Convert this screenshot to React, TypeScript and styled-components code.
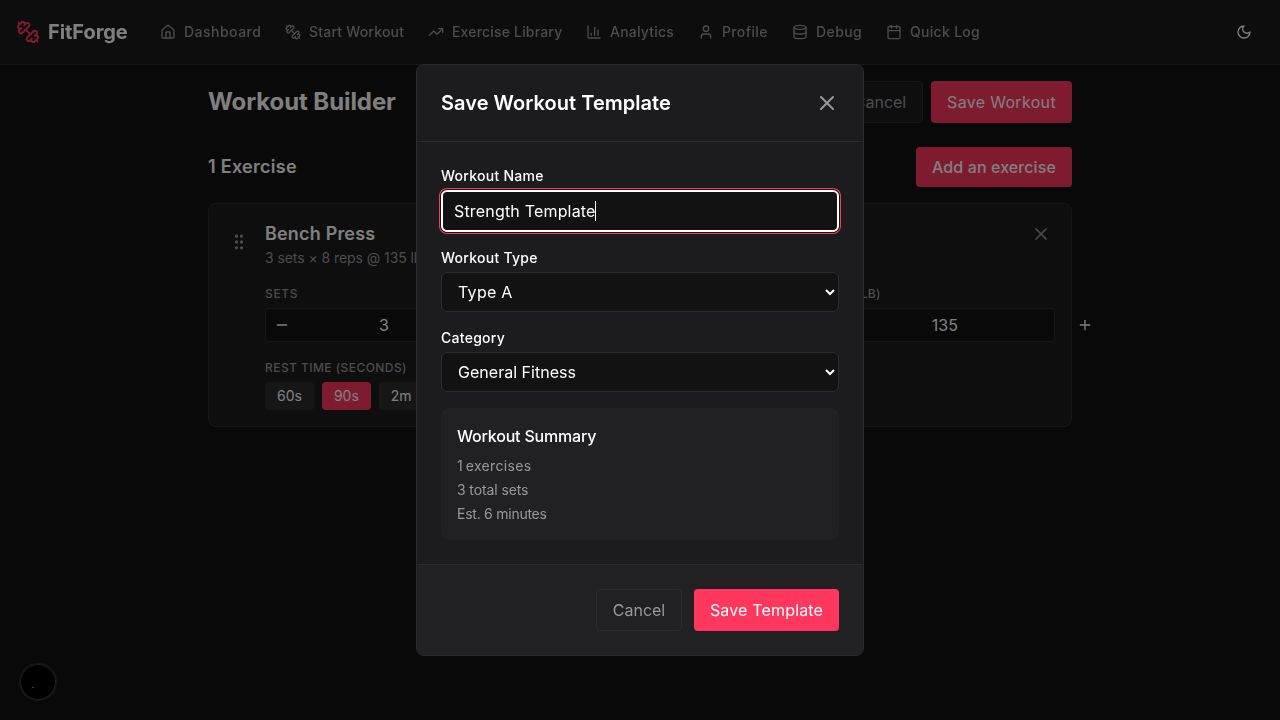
import React from "react";
import styled, { createGlobalStyle } from "styled-components";
import {
  Calendar,
  ChartColumn,
  Database,
  GripVertical,
  House,
  Minus,
  Plus,
  TrendingUp,
  User,
  X,
} from "lucide-react";

const GlobalStyle = createGlobalStyle`
  *, *::before, *::after { box-sizing: border-box; }
  html, body { margin: 0; height: 100%; overflow: hidden; }
  body {
    background: #121212;
    color: #ffffff;
    font-family: Inter, "Liberation Sans", sans-serif;
    font-size: 16px;
    line-height: 24px;
  }
  button, input, select { font: inherit; color: inherit; }
  h1, h2, h3, h4, p { margin: 0; }
  svg { display: block; flex-shrink: 0; }
`;

const Header = styled.header`
  display: flex;
  align-items: center;
  height: 65px;
  padding: 0 16px;
  border-bottom: 1px solid #2c2c2e;
  background: #1a1a1a;
  will-change: transform;
`;

const Brand = styled.div`
  display: flex;
  align-items: center;
  gap: 8px;
  width: 112px;
  margin-right: 32px;
  font-size: 20px;
  font-weight: 700;
  line-height: 28px;
  letter-spacing: -0.06px;
  svg { color: #ff375f; }
`;

const Nav = styled.nav`
  display: flex;
  flex: 1;
  gap: 24px;
`;

const NavItem = styled.a`
  display: flex;
  align-items: center;
  gap: 8px;
  color: #98989d;
  font-size: 14px;
  font-weight: 500;
  line-height: 20px;
`;

const NavLabel = styled.span<{ $width: number; $track: number }>`
  width: ${(p) => p.$width}px;
  letter-spacing: ${(p) => p.$track}px;
  white-space: nowrap;
`;

const ThemeToggle = styled.button`
  display: grid;
  place-items: center;
  width: 40px;
  height: 40px;
  padding: 0;
  border: 0;
  background: none;
`;

const Main = styled.main`
  width: 896px;
  margin: 0 auto;
  padding: 16px;
`;

const SplitRow = styled.div<{ $bottom: number }>`
  display: flex;
  align-items: center;
  justify-content: space-between;
  margin-bottom: ${(p) => p.$bottom}px;
`;

const PageTitle = styled.h1`
  font-size: 24px;
  font-weight: 700;
  line-height: 32px;
  letter-spacing: -0.09px;
`;

const SectionTitle = styled.h2`
  font-size: 18px;
  font-weight: 600;
  line-height: 28px;
  letter-spacing: 0.28px;
`;

const ButtonGroup = styled.div<{ $gap: number }>`
  display: flex;
  gap: ${(p) => p.$gap}px;
`;

const Button = styled.button<{
  $variant?: "primary" | "outline";
  $fill?: string;
  $weight?: number;
  $height?: number;
  $width: number;
  $track?: number;
}>`
  width: ${(p) => p.$width}px;
  height: ${(p) => p.$height ?? 42}px;
  padding: 0;
  border-radius: 4px;
  border: ${(p) => (p.$variant === "outline" ? "1px solid #2c2c2e" : "0")};
  background: ${(p) => p.$fill ?? (p.$variant === "outline" ? "transparent" : "#ff375f")};
  color: ${(p) => (p.$variant === "outline" ? "#98989d" : "#ffffff")};
  font-weight: ${(p) => p.$weight ?? 400};
  letter-spacing: ${(p) => p.$track ?? 0}px;
  white-space: nowrap;
`;

const ExerciseCard = styled.section`
  display: flex;
  gap: 12px;
  height: 224px;
  padding: 16px;
  border: 1px solid #2c2c2e;
  border-radius: 8px;
  background: #1c1c1e;
`;

const DragHandle = styled.div`
  padding: 12px 0 0 4px;
  width: 28px;
  color: #98989d;
`;

const ExerciseBody = styled.div`
  flex: 1;
  min-width: 0;
`;

const ExerciseHead = styled.div`
  display: flex;
  align-items: flex-start;
  justify-content: space-between;
  margin-bottom: 18px;
`;

const ExerciseName = styled.h3`
  font-size: 18px;
  font-weight: 600;
  line-height: 28px;
  letter-spacing: 0.18px;
`;

const ExerciseMeta = styled.p`
  color: #98989d;
  font-size: 14px;
  line-height: 20px;
  letter-spacing: -0.07px;
`;

const IconButton = styled.button<{ $pad: number }>`
  padding: ${(p) => p.$pad}px;
  border: 0;
  background: none;
  color: #98989d;
`;

const FieldGrid = styled.div`
  display: grid;
  grid-template-columns: repeat(3, minmax(0, 1fr));
  gap: 16px;
  margin-bottom: 18px;
`;

const SmallLabel = styled.div<{ $track: number }>`
  margin-bottom: 6px;
  color: #98989d;
  font-size: 12px;
  font-weight: 500;
  line-height: 16px;
  letter-spacing: ${(p) => p.$track}px;
  text-transform: uppercase;
`;

const Stepper = styled.div`
  display: flex;
  align-items: center;
  height: 34px;
  border: 1px solid #2c2c2e;
  border-radius: 4px;
  background: #121212;
`;

const StepButton = styled.button`
  display: grid;
  place-items: center;
  flex: 0 0 32px;
  height: 32px;
  padding: 0;
  border: 0;
  background: none;
`;

const StepValue = styled.div<{ $width?: number }>`
  flex: ${(p) => (p.$width ? `0 0 ${p.$width}px` : "1")};
  padding-right: 15px;
  text-align: center;
`;

const ChipRow = styled.div`
  display: flex;
  gap: 8px;
`;

const Chip = styled.button<{ $active?: boolean }>`
  height: 28px;
  padding: 0 12px;
  border: 0;
  border-radius: 4px;
  background: ${(p) => (p.$active ? "#ff375f" : "#2c2c2e")};
  font-size: 14px;
  line-height: 20px;
`;

const Overlay = styled.div`
  position: fixed;
  inset: 0;
  display: flex;
  align-items: center;
  justify-content: center;
  background: rgba(0, 0, 0, 0.5);
`;

const Dialog = styled.div`
  width: 448px;
  height: 592px;
  border: 1px solid #2c2c2e;
  border-radius: 8px;
  background: #1c1c1e;
  overflow: hidden;
`;

const DialogHead = styled.div`
  display: flex;
  align-items: center;
  justify-content: space-between;
  height: 77px;
  padding: 0 24px;
  border-bottom: 1px solid #2c2c2e;
`;

const DialogTitle = styled.h2`
  font-size: 20px;
  font-weight: 600;
  line-height: 28px;
  letter-spacing: 0.04px;
`;

const DialogBody = styled.div`
  padding: 24px;
`;

const Field = styled.div`
  margin-bottom: 16px;
`;

const FieldLabel = styled.label`
  display: block;
  margin-bottom: 4px;
  font-size: 14px;
  font-weight: 500;
  line-height: 20px;
  letter-spacing: 0.27px;
`;

const NameInput = styled.div`
  display: flex;
  align-items: center;
  height: 42px;
  padding: 0 11px;
  border: 2px solid #ffffff;
  border-radius: 6px;
  background: #121212;
  box-shadow: 0 0 0 1px #121212, 0 0 0 2px #ff375f;
  letter-spacing: 0.18px;
`;

const Caret = styled.span`
  width: 1px;
  height: 20px;
  margin-left: -1px;
  background: #ffffff;
`;

const Select = styled.select<{ $track: number }>`
  display: block;
  width: 100%;
  height: 40px;
  padding: 0 0 0 12px;
  border: 1px solid #2c2c2e;
  border-radius: 6px;
  background: #121212;
  outline: none;
  letter-spacing: ${(p) => p.$track}px;
`;

const Summary = styled.div`
  height: 132px;
  padding: 16px;
  border-radius: 8px;
  background: #212123;
`;

const SummaryTitle = styled.h4`
  margin-bottom: 8px;
  font-size: 16px;
  font-weight: 500;
  line-height: 24px;
  letter-spacing: -0.19px;
`;

const SummaryLine = styled.p<{ $track: number; $wordGap?: number }>`
  margin-bottom: 4px;
  color: #98989d;
  font-size: 14px;
  line-height: 20px;
  letter-spacing: ${(p) => p.$track}px;
  word-spacing: ${(p) => p.$wordGap ?? 0}px;
`;

const DialogFoot = styled.div`
  display: flex;
  justify-content: flex-end;
  gap: 12px;
  height: 92px;
  padding: 24px;
  border-top: 1px solid #2c2c2e;
  background: #212123;
`;

const DevBadge = styled.div`
  position: fixed;
  left: 20px;
  bottom: 20px;
  width: 36px;
  height: 36px;
  border-radius: 50%;
  background: #000000;
  box-shadow: inset 0 0 0 1px #3c3c3c, 0 0 0 1px #2e2e2e;
`;

const DevBadgeMark = styled.span`
  position: absolute;
  left: 12px;
  top: 23px;
  width: 2px;
  height: 1px;
  background: #777777;
`;

function DumbbellIcon({ size }: { size: number }) {
  return (
    <svg
      width={size}
      height={size}
      viewBox="0 0 24 24"
      fill="none"
      stroke="currentColor"
      strokeWidth="2"
      strokeLinecap="round"
      strokeLinejoin="round"
    >
      <path d="M14.4 14.4 9.6 9.6" />
      <path d="M18.657 21.485a2 2 0 1 1-2.829-2.828l-1.767 1.768a2 2 0 1 1-2.829-2.829l6.364-6.364a2 2 0 1 1 2.829 2.829l-1.768 1.767a2 2 0 1 1 2.828 2.829z" />
      <path d="m21.5 21.5-1.4-1.4" />
      <path d="M3.9 3.9 2.5 2.5" />
      <path d="M6.404 12.768a2 2 0 1 1-2.829-2.829l1.768-1.767a2 2 0 1 1-2.828-2.829l2.828-2.828a2 2 0 1 1 2.829 2.828l1.767-1.768a2 2 0 1 1 2.829 2.829z" />
    </svg>
  );
}

function MoonIcon() {
  return (
    <svg
      width="16"
      height="16"
      viewBox="0 0 24 24"
      fill="none"
      stroke="currentColor"
      strokeWidth="2"
      strokeLinecap="round"
      strokeLinejoin="round"
    >
      <path d="M12 3a6 6 0 0 0 9 9 9 9 0 1 1-9-9Z" />
    </svg>
  );
}

const navItems = [
  { label: "Dashboard", icon: <House size={16} />, width: 77, track: 0.48 },
  { label: "Start Workout", icon: <DumbbellIcon size={16} />, width: 95, track: 0.2 },
  { label: "Exercise Library", icon: <TrendingUp size={16} />, width: 110, track: 0.18 },
  { label: "Analytics", icon: <ChartColumn size={16} />, width: 64, track: 0.22 },
  { label: "Profile", icon: <User size={16} />, width: 46, track: 0.36 },
  { label: "Debug", icon: <Database size={16} />, width: 46, track: 0.4 },
  { label: "Quick Log", icon: <Calendar size={16} />, width: 70, track: 0.3 },
];

const steppers = [
  { label: "Sets", value: "3", track: 0.65 },
  { label: "Reps", value: "8", track: 0.6 },
  { label: "Weight (lb)", value: "135", width: 234, track: 0.3 },
];

const restTimes = ["60s", "90s", "2m", "3m"];

export default function App() {
  return (
    <>
      <GlobalStyle />
      <Header>
        <Brand>
          <DumbbellIcon size={24} />
          FitForge
        </Brand>
        <Nav>
          {navItems.map((item) => (
            <NavItem key={item.label}>
              {item.icon}
              <NavLabel $width={item.width} $track={item.track}>
                {item.label}
              </NavLabel>
            </NavItem>
          ))}
        </Nav>
        <ThemeToggle aria-label="Toggle theme">
          <MoonIcon />
        </ThemeToggle>
      </Header>

      <Main>
        <SplitRow $bottom={24}>
          <PageTitle>Workout Builder</PageTitle>
          <ButtonGroup $gap={8}>
            <Button $variant="outline" $fill="#1c1c1e" $width={86}>
              Cancel
            </Button>
            <Button $width={141} $track={0.32}>
              Save Workout
            </Button>
          </ButtonGroup>
        </SplitRow>
        <SplitRow $bottom={16}>
          <SectionTitle>1 Exercise</SectionTitle>
          <Button $weight={500} $height={40} $width={156} $track={0.1}>
            Add an exercise
          </Button>
        </SplitRow>

        <ExerciseCard>
          <DragHandle>
            <GripVertical size={20} />
          </DragHandle>
          <ExerciseBody>
            <ExerciseHead>
              <div>
                <ExerciseName>Bench Press</ExerciseName>
                <ExerciseMeta>3 sets × 8 reps @ 135 lb</ExerciseMeta>
              </div>
              <IconButton $pad={4} aria-label="Remove exercise">
                <X size={20} />
              </IconButton>
            </ExerciseHead>
            <FieldGrid>
              {steppers.map((s) => (
                <div key={s.label}>
                  <SmallLabel $track={s.track}>{s.label}</SmallLabel>
                  <Stepper>
                    <StepButton aria-label="Decrease">
                      <Minus size={16} />
                    </StepButton>
                    <StepValue $width={s.width}>{s.value}</StepValue>
                    <StepButton aria-label="Increase">
                      <Plus size={16} />
                    </StepButton>
                  </Stepper>
                </div>
              ))}
            </FieldGrid>
            <SmallLabel $track={0.44}>Rest Time (seconds)</SmallLabel>
            <ChipRow>
              {restTimes.map((t) => (
                <Chip key={t} $active={t === "90s"}>
                  {t}
                </Chip>
              ))}
            </ChipRow>
          </ExerciseBody>
        </ExerciseCard>
      </Main>

      <DevBadge>
        <DevBadgeMark />
      </DevBadge>

      <Overlay>
        <Dialog role="dialog">
          <DialogHead>
            <DialogTitle>Save Workout Template</DialogTitle>
            <IconButton $pad={0} aria-label="Close">
              <X size={24} />
            </IconButton>
          </DialogHead>
          <DialogBody>
            <Field>
              <FieldLabel>Workout Name</FieldLabel>
              <NameInput>
                Strength Template
                <Caret />
              </NameInput>
            </Field>
            <Field>
              <FieldLabel>Workout Type</FieldLabel>
              <Select defaultValue="Type A" $track={0.28}>
                <option>Type A</option>
                <option>Type B</option>
              </Select>
            </Field>
            <Field>
              <FieldLabel>Category</FieldLabel>
              <Select defaultValue="General Fitness" $track={0.02}>
                <option>General Fitness</option>
              </Select>
            </Field>
            <Summary>
              <SummaryTitle>Workout Summary</SummaryTitle>
              <SummaryLine $track={0.35} $wordGap={-1.6}>
                1 exercises
              </SummaryLine>
              <SummaryLine $track={-0.11}>3 total sets</SummaryLine>
              <SummaryLine $track={-0.25}>Est. 6 minutes</SummaryLine>
            </Summary>
          </DialogBody>
          <DialogFoot>
            <Button $variant="outline" $width={86}>
              Cancel
            </Button>
            <Button $width={145} $track={0.17}>
              Save Template
            </Button>
          </DialogFoot>
        </Dialog>
      </Overlay>
    </>
  );
}
